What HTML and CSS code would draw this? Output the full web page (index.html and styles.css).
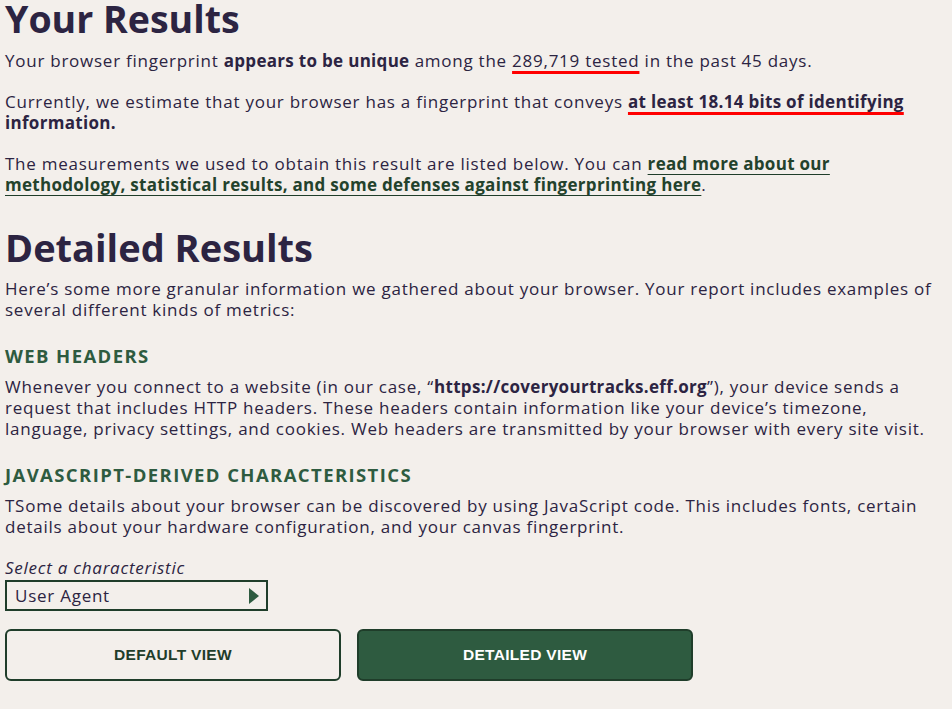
FILE: index.html
```html
<!DOCTYPE html>
<html lang="en">
<head>
<meta charset="utf-8">
<title>Your Results</title>
<link rel="stylesheet" href="styles.css">
</head>
<body>
<main class="page">
  <h1 class="title title-top">Your Results</h1>
  <p class="text text-first">Your browser fingerprint <strong>appears to be unique</strong> among the <span class="red-ul">289,719 tested</span> in the past 45 days.</p>
  <p class="text">Currently, we estimate that your browser has a fingerprint that conveys <strong class="red-ul">at least 18.14 bits of identifying </strong><strong>information.</strong></p>
  <p class="text">The measurements we used to obtain this result are listed below. You can <a class="link" href="#">read more about our methodology, statistical results, and some defenses against fingerprinting here</a>.</p>

  <h1 class="title title-detail">Detailed Results</h1>
  <p class="text">Here’s some more granular information we gathered about your browser. Your report includes examples of several different kinds of metrics:</p>

  <h3 class="subhead">WEB HEADERS</h3>
  <p class="text">Whenever you connect to a website (in our case, “<strong>https://coveryourtracks.eff.org</strong>”), your device sends a request that includes HTTP headers. These headers contain information like your device’s timezone, language, privacy settings, and cookies. Web headers are transmitted by your browser with every site visit.</p>

  <h3 class="subhead">JAVASCRIPT-DERIVED CHARACTERISTICS</h3>
  <p class="text">TSome details about your browser can be discovered by using JavaScript code. This includes fonts, certain details about your hardware configuration, and your canvas fingerprint.</p>

  <label class="select-label">Select a characteristic</label>
  <div class="select">
    <span class="select-value">User Agent</span>
    <svg class="select-arrow" width="10" height="16" viewBox="0 0 10 16"><path d="M0 0 L10 8 L0 16 Z" fill="#2e5b40"/></svg>
  </div>

  <div class="buttons">
    <button class="btn btn-outline">DEFAULT VIEW</button>
    <button class="btn btn-solid">DETAILED VIEW</button>
  </div>
</main>
</body>
</html>
```
FILE: styles.css
```css
html, body {
  margin: 0;
  padding: 0;
  background: #f3efeb;
}
body {
  font-family: "Open Sans", "DejaVu Sans", sans-serif;
  color: #2c2442;
  font-size: 17px;
  line-height: 21px;
  letter-spacing: 0.75px;
}
.page {
  padding: 0 5px;
}
.title {
  font-size: 38px;
  font-weight: 700;
  line-height: 42px;
  margin: 0;
  color: #2c2442;
  letter-spacing: 0;
}
.title-top {
  margin-top: -2px;
  font-size: 37.5px;
}
.title-detail {
  margin-top: 31px;
  margin-bottom: 10px;
}
.text {
  margin: 0 0 20px 0;
}
.text-first {
  margin-top: 10px;
}
strong {
  font-weight: 700;
  letter-spacing: 0.3px;
}
.red-ul {
  text-decoration: underline;
  text-decoration-color: #ff0000;
  text-decoration-thickness: 3px;
  text-underline-offset: 4px;
}
.link {
  color: #23422c;
  font-weight: 700;
  letter-spacing: 0.3px;
  text-decoration: underline;
  text-decoration-color: #1f3d2a;
  text-underline-offset: 4px;
}
.subhead {
  font-size: 18.5px;
  font-weight: 700;
  color: #2e5b40;
  letter-spacing: 1.4px;
  margin: 24px 0 8px 0;
  line-height: 24px;
}
.select-label {
  display: block;
  font-style: italic;
  margin-top: 0;
}
.select {
  box-sizing: border-box;
  width: 263px;
  height: 31px;
  border: 2px solid #1f3d2a;
  display: flex;
  align-items: center;
  justify-content: space-between;
  padding: 0 7px 0 8px;
  margin-top: 2px;
}
.select-value {
  font-size: 17px;
}
.buttons {
  display: flex;
  gap: 16px;
  margin-top: 18px;
}
.btn {
  width: 336px;
  height: 52px;
  border-radius: 6px;
  border: 2px solid #1f3d2a;
  font-family: "Liberation Sans", Arial, sans-serif;
  font-weight: 700;
  font-size: 15.5px;
  letter-spacing: 0.3px;
  cursor: pointer;
}
.btn-outline {
  background: #f3efeb;
  color: #1f3d2a;
}
.btn-solid {
  background: #2e5b40;
  color: #ffffff;
}
```
